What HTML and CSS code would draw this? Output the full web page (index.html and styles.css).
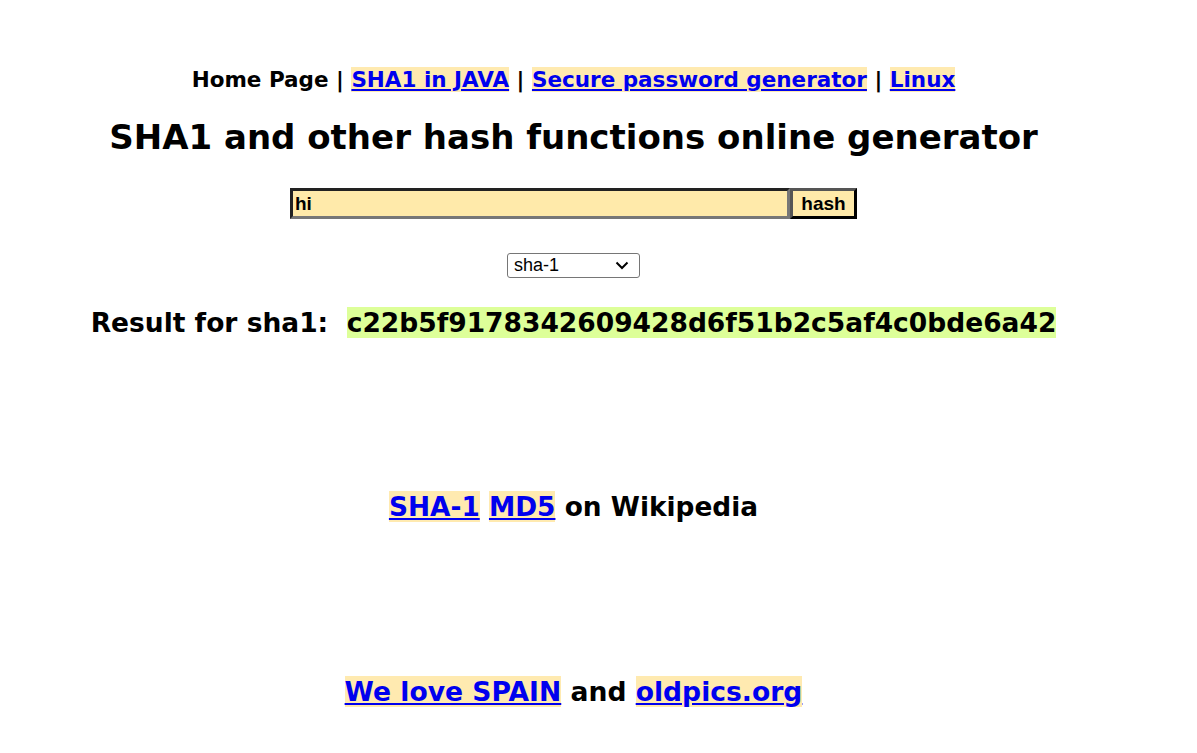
FILE: index.html
```html
<!DOCTYPE html>
<html>
<head>
<meta charset="utf-8">
<title>SHA1 and other hash functions online generator</title>
<link rel="stylesheet" href="styles.css">
</head>
<body>
<div class="page">
  <nav class="nav">Home Page | <a href="#">SHA1 in JAVA</a> | <a href="#">Secure password generator</a> | <a href="#">Linux</a></nav>
  <h1 class="title">SHA1 and other hash functions online generator</h1>
  <form class="form">
    <div class="row">
      <input class="text" type="text" value="hi"><button class="btn" type="button">hash</button>
    </div>
    <div class="selrow">
      <div class="selwrap">
        <select class="sel">
          <option>sha-1</option>
          <option>md5</option>
        </select>
        <svg class="chev" width="14" height="9" viewBox="0 0 14 9"><path d="M1.5 1.5 L7 7 L12.5 1.5" fill="none" stroke="#000" stroke-width="2"/></svg>
      </div>
    </div>
  </form>
  <div class="result">Result for sha1:&nbsp; <span class="hash">c22b5f9178342609428d6f51b2c5af4c0bde6a42</span></div>
  <div class="wiki"><a href="#">SHA-1</a> <a href="#">MD5</a> on Wikipedia</div>
  <div class="spain"><a href="#">We love SPAIN</a> and <a href="#">oldpics.org</a></div>
</div>
</body>
</html>
```
FILE: styles.css
```css
html, body {
  margin: 0;
  padding: 0;
  background: #fff;
}
body {
  font-family: "DejaVu Sans", Verdana, sans-serif;
  font-weight: bold;
  color: #000;
}
.page {
  width: 1131px;
  margin-left: 8px;
  text-align: center;
  padding-top: 67px;
}
a {
  color: #0000ee;
  background: #ffeab0;
  text-decoration: underline;
}
.nav {
  font-size: 21.5px;
  line-height: 26px;
}
.title {
  font-size: 34px;
  line-height: 40px;
  margin: 24px 0 0;
}
.form {
  margin: 31px 0 0;
}
.row {
  display: flex;
  justify-content: center;
}
.text {
  width: 500px;
  height: 31px;
  box-sizing: border-box;
  border: 3px solid;
  border-color: #222 #777 #777 #222;
  background: #ffeaaa;
  font-family: "Liberation Sans", Arial, sans-serif;
  font-weight: bold;
  font-size: 19px;
  color: #000;
  padding: 0 2px;
  margin: 0;
  outline: none;
}
.btn {
  width: 67px;
  height: 31px;
  box-sizing: border-box;
  border: 3px solid;
  border-color: #555 #000 #000 #555;
  background: #ffeaaa;
  font-family: "Liberation Sans", Arial, sans-serif;
  font-weight: bold;
  font-size: 19px;
  padding: 0;
  margin: 0;
  color: #000;
}
.selrow {
  margin-top: 34px;
  display: flex;
  justify-content: center;
}
.selwrap {
  position: relative;
  width: 133px;
  height: 25px;
}
.sel {
  -webkit-appearance: none;
  appearance: none;
  display: block;
  width: 133px;
  height: 25px;
  box-sizing: border-box;
  font-family: "Liberation Sans", Arial, sans-serif;
  font-weight: normal;
  font-size: 18px;
  line-height: 23px;
  padding: 0 0 0 6px;
  margin: 0;
  border: 1px solid #767676;
  border-radius: 3px;
  background: #fff;
  color: #000;
}
.chev {
  position: absolute;
  right: 11px;
  top: 8px;
  pointer-events: none;
}
.result {
  font-size: 26.5px;
  line-height: 32px;
  margin-top: 29px;
}
.hash {
  background: #ddff99;
}
.wiki {
  font-size: 26.4px;
  line-height: 32px;
  margin-top: 152px;
}
.spain {
  font-size: 26.6px;
  line-height: 32px;
  margin-top: 153px;
}
```
